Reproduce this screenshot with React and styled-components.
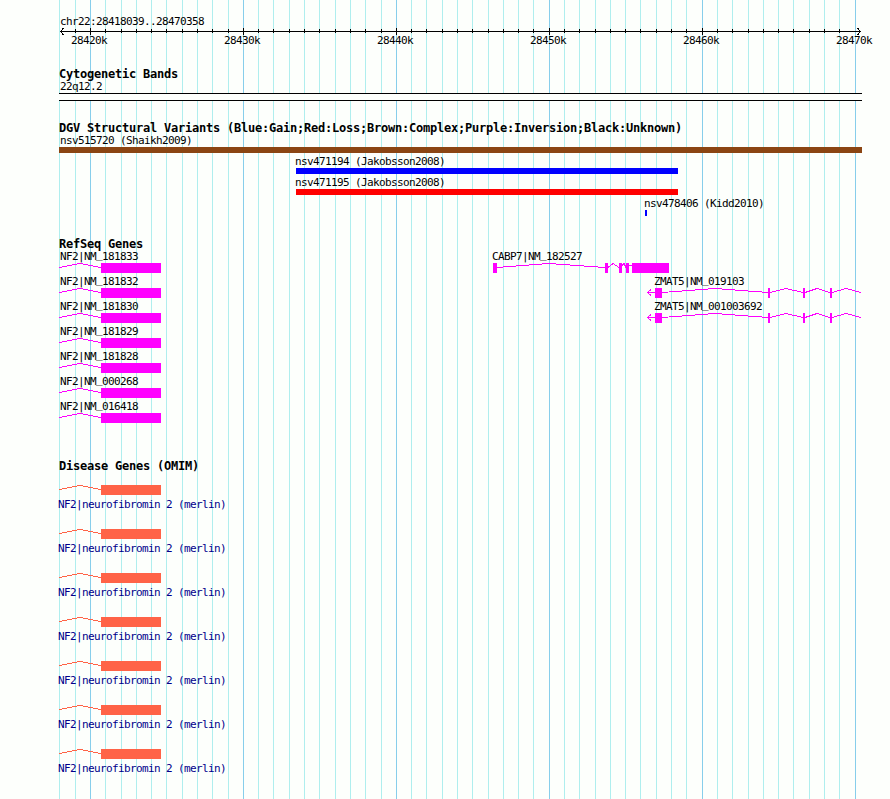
import styled, { createGlobalStyle } from "styled-components";

const LEFT = 59;
const WIDTH = 803;

const gridLines = Array.from({ length: 53 }, (_, i) => ({
  x: Math.floor(90.5 + 15.2911 * (i - 2)),
  major: (i - 2) % 10 === 0,
}));

const ticks = ["28420k", "28430k", "28440k", "28450k", "28460k", "28470k"];

const variants = [
  { name: "nsv515720 (Shaikh2009)", labelX: 60, start: 59, end: 862, color: "#8b4513" },
  { name: "nsv471194 (Jakobsson2008)", labelX: 295, start: 296, end: 678, color: "#0000ff" },
  { name: "nsv471195 (Jakobsson2008)", labelX: 295, start: 296, end: 678, color: "#ff0000" },
  { name: "nsv478406 (Kidd2010)", labelX: 644, start: 645, end: 647, color: "#0000ff" },
];

const nf2 = {
  exons: [[101, 161]],
  introns: ["59,4.5 80,0.5 101,4.5"],
};

const cabp7 = {
  name: "CABP7|NM_182527",
  labelX: 492,
  exons: [
    [493, 497],
    [605, 608],
    [619, 622],
    [626, 629],
    [632, 669],
  ],
  introns: [
    "497,4.5 549,0.5 605,4.5",
    "608,4.5 613,0.5 619,4.5",
    "622,2.5 624,0.5 626,4.5",
    "629,2.5 632,2.5",
  ],
};

const zmat5 = {
  labelX: 654,
  exons: [
    [655, 662],
    [768, 770],
    [803, 805],
    [830, 832],
  ],
  introns: [
    "651,1.5 647.5,4.5 651,7.5",
    "647,4.5 655,4.5",
    "662,4.5 715,0.5 768,4.5",
    "770,4.5 786,0.5 803,4.5",
    "805,4.5 817,0.5 830,4.5",
    "832,4.5 846,0.5 861,4.5",
  ],
};

const refSeq = [
  [{ ...nf2, name: "NF2|NM_181833", labelX: 60 }, cabp7],
  [{ ...nf2, name: "NF2|NM_181832", labelX: 60 }, { ...zmat5, name: "ZMAT5|NM_019103" }],
  [{ ...nf2, name: "NF2|NM_181830", labelX: 60 }, { ...zmat5, name: "ZMAT5|NM_001003692" }],
  [{ ...nf2, name: "NF2|NM_181829", labelX: 60 }],
  [{ ...nf2, name: "NF2|NM_181828", labelX: 60 }],
  [{ ...nf2, name: "NF2|NM_000268", labelX: 60 }],
  [{ ...nf2, name: "NF2|NM_016418", labelX: 60 }],
];

const GeneModel = ({ gene, color }) => (
  <Drawing width={WIDTH} height={10} viewBox={`${LEFT} 0 ${WIDTH} 10`}>
    {gene.introns.map((points) => (
      <polyline key={points} points={points} fill="none" stroke={color} />
    ))}
    {gene.exons.map(([start, end]) => (
      <rect key={start} x={start} y={0} width={end - start} height={10} fill={color} />
    ))}
  </Drawing>
);

const GeneName = ({ name }) => {
  const [prefix, accession] = name.split("_");

  return (
    <>
      {prefix}
      <Underscore>_</Underscore>
      {accession}
    </>
  );
};

const Ruler = () => (
  <RulerBox>
    <Label $x={60}>chr22:28418039..28470358</Label>
    <Drawing width={WIDTH} height={7} viewBox={`${LEFT} 0 ${WIDTH} 7`}>
      <rect x={60} y={3} width={801} height={1} />
      <polyline points="63.5,0 60.5,3.5 63.5,7" fill="none" stroke="#000" />
      <polyline points="857.5,0 860.5,3.5 857.5,7" fill="none" stroke="#000" />
      {gridLines.slice(1, -1).map(({ x, major }) => (
        <rect key={x} x={x} y={major ? 0 : 1} width={1} height={major ? 7 : 4} />
      ))}
    </Drawing>
    <TickLabels>
      {ticks.map((tick) => (
        <span key={tick}>{tick}</span>
      ))}
    </TickLabels>
  </RulerBox>
);

const App = () => {
  return (
    <Page>
      <GlobalStyle />
      <Backdrop width={890} height={799}>
        {gridLines.map(({ x, major }) => (
          <rect key={x} x={x} y={0} width={1} height={799} fill={major ? "#87ceeb" : "#afeeee"} />
        ))}
      </Backdrop>
      <Tracks>
        <Ruler />

        <Track $height={54}>
          <Title>Cytogenetic Bands</Title>
          <Label $x={60}>22q12.2</Label>
          <Band />
        </Track>

        <Track $height={116}>
          <Title>
            DGV Structural Variants (Blue:Gain;Red:Loss;Brown:Complex;Purple:Inversion;Black:Unknown)
          </Title>
          {variants.map((v) => (
            <div key={v.name}>
              <Label $x={v.labelX}>{v.name}</Label>
              <Bar $start={v.start} $end={v.end} $color={v.color} />
            </div>
          ))}
        </Track>

        <Track $height={222}>
          <Title>RefSeq Genes</Title>
          {refSeq.map((lane) => (
            <Lane key={lane[0].name}>
              {lane.map((gene) => (
                <Feature key={gene.name}>
                  <Label $x={gene.labelX}>
                    <GeneName name={gene.name} />
                  </Label>
                  <GeneModel gene={gene} color="#ff00ff" />
                </Feature>
              ))}
            </Lane>
          ))}
        </Track>

        <Track $height={341}>
          <Title>Disease Genes (OMIM)</Title>
          <DiseaseList>
            {refSeq.map((lane) => (
              <DiseaseGene key={lane[0].name}>
                <GeneModel gene={nf2} color="#ff6347" />
                <Label $x={58} $color="#00008b">
                  NF2|neurofibromin 2 (merlin)
                </Label>
              </DiseaseGene>
            ))}
          </DiseaseList>
        </Track>
      </Tracks>
    </Page>
  );
};

export default App;

const GlobalStyle = createGlobalStyle`
  body {
    margin: 0;
    background: #fdfffc;
  }
`;

const Page = styled.div`
  display: grid;
  width: 890px;
  height: 799px;
  overflow: hidden;
  background: #fdfffc;
  color: #000;
  font-family: "DejaVu Sans Mono", monospace;
`;

const Backdrop = styled.svg`
  grid-area: 1 / 1;
  display: block;
  shape-rendering: crispEdges;
`;

const Tracks = styled.main`
  grid-area: 1 / 1;
  width: ${WIDTH}px;
  padding: 13px 0 0 ${LEFT}px;
`;

const Drawing = styled.svg`
  display: block;
  shape-rendering: crispEdges;
`;

const RulerBox = styled.div`
  height: 53px;
`;

const TickLabels = styled.div`
  display: flex;
  gap: 117px;
  padding-left: 12px;
  font-size: 11px;
  line-height: 11px;
  letter-spacing: -0.62px;

  span {
    flex: 0 0 36px;
    white-space: nowrap;
  }
`;

const Track = styled.section`
  height: ${({ $height }) => $height}px;
`;

const Title = styled.div`
  height: 12px;
  font-size: 12px;
  font-weight: 700;
  line-height: 16px;
  letter-spacing: -0.224px;
  white-space: nowrap;
`;

const Label = styled.div`
  height: 15px;
  margin-left: ${({ $x }) => $x - LEFT}px;
  color: ${({ $color }) => $color || "#000"};
  font-size: 11px;
  line-height: 17px;
  letter-spacing: -0.622px;
  white-space: nowrap;
`;

const Underscore = styled.span`
  line-height: 0;
  vertical-align: 2px;
`;

const Band = styled.div`
  box-sizing: border-box;
  height: 8px;
  border: solid #000;
  border-width: 1px 0;
  background: #fdfffc;
`;

const Bar = styled.div`
  width: ${({ $start, $end }) => $end - $start}px;
  height: 6px;
  margin-left: ${({ $start }) => $start - LEFT}px;
  background: ${({ $color }) => $color};
`;

const Lane = styled.div`
  display: grid;
  height: 25px;
`;

const Feature = styled.div`
  grid-area: 1 / 1;
`;

const DiseaseList = styled.div`
  display: flex;
  flex-direction: column;
  gap: 18px;
  padding-top: 15px;
`;

const DiseaseGene = styled.div`
  display: flex;
  flex-direction: column;
  gap: 1px;
`;
